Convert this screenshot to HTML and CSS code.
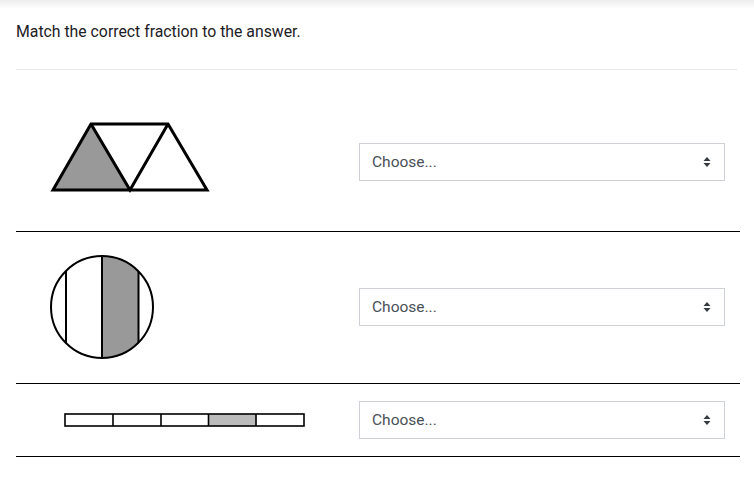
FILE: index.html
```html
<!DOCTYPE html>
<html lang="en">
<head>
<meta charset="utf-8">
<title>Match fractions</title>
<link rel="stylesheet" href="styles.css">
</head>
<body>
<div class="topshade"></div>
<main class="question">
  <p class="prompt">Match the correct fraction to the answer.</p>
  <hr class="divider">
  <div class="answers">
    <div class="row row-first">
      <div class="figure">
        <svg class="fig-tri" width="170" height="80" viewBox="0 0 170 80">
          <polygon points="3,68 41,2 80,68" fill="#999" stroke="none"/>
          <polygon points="3,68 41,2 118,2 157,68" fill="none" stroke="#000" stroke-width="3" stroke-linejoin="miter"/>
          <polyline points="41,2 80,68 118,2" fill="none" stroke="#000" stroke-width="3"/>
        </svg>
      </div>
      <div class="choice">
        <div class="select"><span>Choose...</span><svg class="caret" width="8" height="12" viewBox="0 0 8 12"><path d="M4 1 L7.5 5 L0.5 5 Z M4 11 L7.5 7 L0.5 7 Z" fill="#343a40"/></svg></div>
      </div>
    </div>
    <div class="row row-second">
      <div class="figure">
        <svg class="fig-circle" width="110" height="110" viewBox="0 0 110 110">
          <defs><clipPath id="cc"><circle cx="53" cy="55" r="51"/></clipPath></defs>
          <rect x="53" y="0" width="36.5" height="110" fill="#999" clip-path="url(#cc)"/>
          <g clip-path="url(#cc)" stroke="#000" stroke-width="2">
            <line x1="17" y1="0" x2="17" y2="110"/>
            <line x1="53" y1="0" x2="53" y2="110"/>
            <line x1="89.5" y1="0" x2="89.5" y2="110"/>
          </g>
          <circle cx="53" cy="55" r="51" fill="none" stroke="#000" stroke-width="2"/>
        </svg>
      </div>
      <div class="choice">
        <div class="select"><span>Choose...</span><svg class="caret" width="8" height="12" viewBox="0 0 8 12"><path d="M4 1 L7.5 5 L0.5 5 Z M4 11 L7.5 7 L0.5 7 Z" fill="#343a40"/></svg></div>
      </div>
    </div>
    <div class="row row-third">
      <div class="figure">
        <svg class="fig-bar" width="244" height="16" viewBox="0 0 244 16">
          <rect x="145" y="2" width="47.5" height="12" fill="#bbb"/>
          <rect x="1" y="2" width="239" height="12" fill="none" stroke="#000" stroke-width="1.6"/>
          <g stroke="#000" stroke-width="1.6">
            <line x1="49" y1="2" x2="49" y2="14"/>
            <line x1="97" y1="2" x2="97" y2="14"/>
            <line x1="144.5" y1="2" x2="144.5" y2="14"/>
            <line x1="192" y1="2" x2="192" y2="14"/>
          </g>
        </svg>
      </div>
      <div class="choice">
        <div class="select"><span>Choose...</span><svg class="caret" width="8" height="12" viewBox="0 0 8 12"><path d="M4 1 L7.5 5 L0.5 5 Z M4 11 L7.5 7 L0.5 7 Z" fill="#343a40"/></svg></div>
      </div>
    </div>
  </div>
</main>
</body>
</html>
```
FILE: styles.css
```css
html, body {
  margin: 0;
  padding: 0;
  background: #fff;
}
body {
  font-family: Roboto, "Liberation Sans", Arial, sans-serif;
  color: #1d2125;
  width: 754px;
  height: 482px;
  overflow: hidden;
}
.topshade {
  height: 9px;
  background: linear-gradient(to bottom, #ededed, #fff);
}
.question {
  padding: 0 14px 0 16px;
}
.prompt {
  margin: 12px 0 0 0;
  font-size: 15.8px;
  line-height: 22px;
  height: 22px;
}
.divider {
  border: 0;
  border-top: 1px solid #e8e8e8;
  margin: 26px 3px 0 0;
  height: 0;
}
.answers {
  display: flex;
  flex-direction: column;
}
.row {
  display: grid;
  grid-template-columns: 343px 1fr;
  align-items: center;
  border-bottom: 1px solid #000;
  box-sizing: border-box;
}
.row-first {
  height: 162px;
  padding-top: 23px;
}
.row-second {
  height: 152px;
  padding-bottom: 2px;
}
.row-third {
  height: 73px;
}
.figure {
  display: flex;
  align-items: center;
}
.fig-tri {
  margin-left: 34px;
  margin-top: 0;
}
.fig-circle {
  margin-left: 33px;
}
.fig-bar {
  margin-left: 48px;
}
.figure svg {
  display: block;
}
.choice {
  display: flex;
}
.select {
  width: 366px;
  height: 38px;
  box-sizing: border-box;
  border: 1px solid #cfd3d7;
  display: flex;
  align-items: center;
  justify-content: space-between;
  padding: 0 13px 0 12px;
  color: #495057;
  font-size: 15.5px;
}
.caret {
  display: block;
}
```
